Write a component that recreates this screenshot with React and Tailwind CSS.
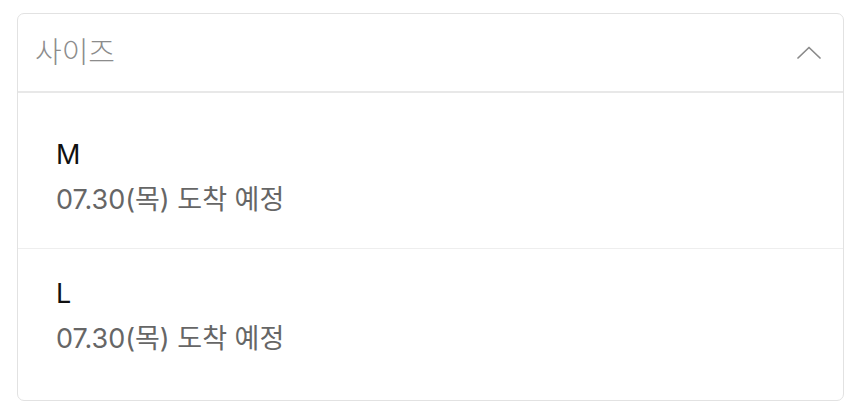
import React, { useState } from 'react';

const sizes = [
  { id: 'M', label: 'M', arrival: '07.30(목) 도착 예정' },
  { id: 'L', label: 'L', arrival: '07.30(목) 도착 예정' }
];

const ChevronUp = ({ className }) => (
  <svg className={className} viewBox="0 0 24 13" fill="none">
    <polyline
      points="1,12 12,1.5 23,12"
      stroke="currentColor"
      strokeWidth="1.7"
      strokeLinecap="round"
      strokeLinejoin="round"
    />
  </svg>
);

const App = () => {
  const [open, setOpen] = useState(true);
  const [selected, setSelected] = useState(null);

  return (
    <div
      className="min-h-screen bg-white pt-[13px] pl-[17px]"
      style={{ fontFamily: 'Inter, "Noto Sans CJK KR", sans-serif' }}
    >
      <div className="w-[827px] rounded-[7px] border border-[#e2e2e2] bg-white">
        {/* Select header */}
        <button
          type="button"
          onClick={() => setOpen(!open)}
          className="flex h-[79px] w-full items-center justify-between border-b-2 border-[#e8e8e8] pl-[17px] pr-[22px]"
        >
          <span className="text-[29px] font-light text-[#8c8c8c]">사이즈</span>
          <ChevronUp className={`h-[13px] w-[24px] text-[#8a8a8a] ${open ? '' : 'rotate-180'}`} />
        </button>

        {/* Options */}
        {open && (
          <ul className="pt-[17px] pb-[13px]">
            {sizes.map((size, i) => (
              <li
                key={size.id}
                onClick={() => setSelected(size.id)}
                className={`cursor-pointer px-[38px] pt-[22px] pb-[26px] ${i > 0 ? 'border-t border-[#eeeeee]' : ''} ${selected === size.id ? 'bg-gray-50' : ''}`}
              >
                <div className="text-[27px] leading-[45px] text-[#111111]">{size.label}</div>
                <div className="text-[27px] leading-[45px] text-[#666666]">{size.arrival}</div>
              </li>
            ))}
          </ul>
        )}
      </div>
    </div>
  );
};

export default App;
